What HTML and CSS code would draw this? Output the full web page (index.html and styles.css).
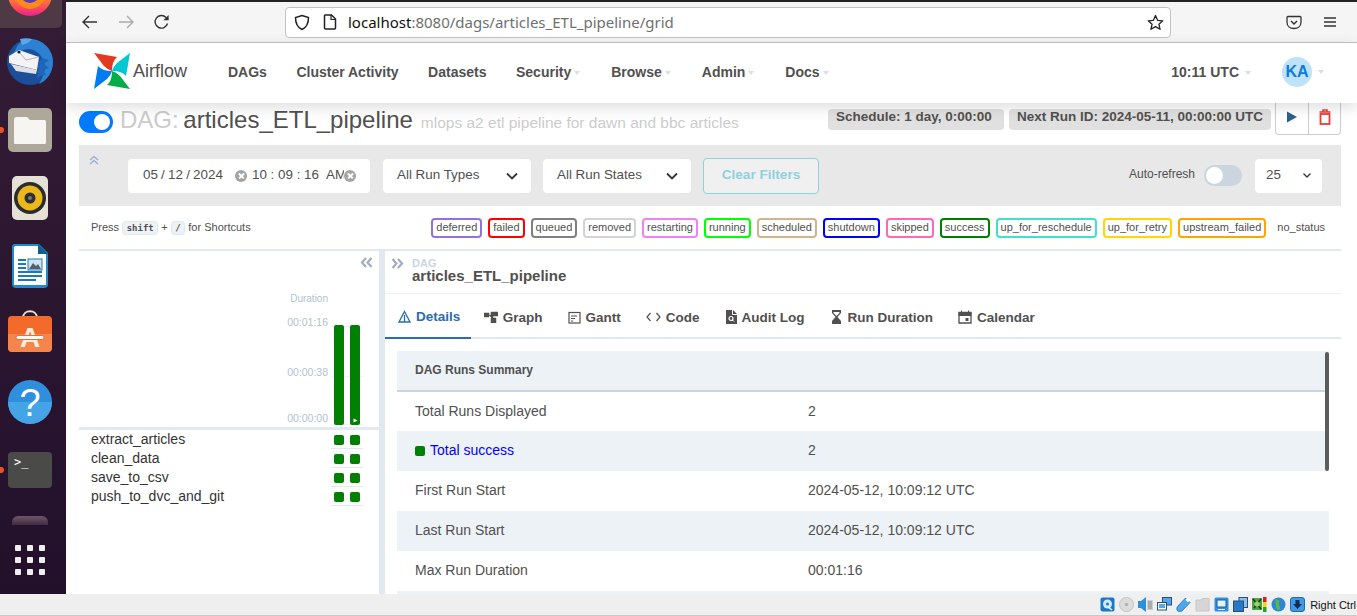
FILE: index.html
```html
<!DOCTYPE html>
<html lang="en">
	<head>
		<title>articles_ETL_pipeline - Grid - Airflow</title>
		<meta name="viewport" content="width=device-width, initial-scale=1" />
		<link rel="stylesheet" href="styles.css">
	</head>
	<body>
		<div class="desktop">
			<nav class="dock">
				<div class="dock-item dock-active">
					<svg width="44" height="44" viewBox="0 0 44 44"><defs><linearGradient id="fx" x1="0" y1="0" x2="0" y2="1"><stop offset="0.5" stop-color="#ff9a1f"/><stop offset="0.85" stop-color="#ff3f5f"/><stop offset="1" stop-color="#e5219a"/></linearGradient></defs><circle cx="22" cy="22" r="22" fill="url(#fx)"/><circle cx="22" cy="22" r="15" fill="#ff8b1f"/><circle cx="22" cy="21" r="10" fill="#5b3bb0"/></svg>
				</div>
				<div class="dock-item">
					<svg width="48" height="48" viewBox="0 0 48 48"><circle cx="24" cy="24" r="23" fill="#1c4f9a"/><path d="M8 16C10 6 17 1 24 1C36 1 47 11 47 24C47 34 41 43 33 46C38 38 40 30 38 24C35 15 28 11 22 11C17 11 14 14 13 17Z" fill="#2d80d2"/><path d="M14 1C18 0 22 0 26 1C24 4 20 6 16 7Z" fill="#5aa9e8"/><path d="M36 20L43 22L38 26L43 30L37 32L40 37L34 38L31 42L33 24Z" fill="#1f66ba"/><path d="M3 18L13 12L33 19L31 32L3 25Z" fill="#f4f2f4"/><path d="M5 26L31 32L30 36L10 33Z" fill="#e2dfe4"/><path d="M13 14L20 22L33 19" fill="none" stroke="#b9b4bc" stroke-width="1"/><circle cx="13" cy="14" r="1.600" fill="#16233f"/></svg>
				</div>
				<div class="dock-item dock-running">
					<svg width="44" height="44" viewBox="0 0 44 44"><rect width="44" height="44" rx="5" fill="#ada89a"/><path d="M6 12C6 10 7 9 9 9H19L22 12H36C38 12 38 13 38 15V34C38 36 37 36 36 36H8C6 36 6 36 6 34Z" fill="#f6f5f2"/></svg>
				</div>
				<div class="dock-item">
					<svg width="36" height="44" viewBox="0 0 36 44"><rect width="36" height="44" rx="5" fill="#e5e1d6"/><circle cx="18" cy="22" r="16" fill="#2b2b2b"/><circle cx="18" cy="22" r="12.500" fill="#eab71c"/><circle cx="18" cy="22" r="5.500" fill="#2e2e2e"/><circle cx="18" cy="22" r="2" fill="#777"/></svg>
				</div>
				<div class="dock-item">
					<svg width="36" height="44" viewBox="0 0 36 44"><path d="M3 0H27L36 9V40C36 43 34 44 32 44H4C2 44 0 43 0 40V3C0 1 1 0 3 0Z" fill="#1e8bcd"/><path d="M3 2H26V10H34V41H2V3Z" fill="#fff"/><path d="M26 0L36 10H26Z" fill="#0f5f8c"/><path d="M6 16H14M6 20H14M6 24H14M6 28H30M6 32H30M6 36H24" stroke="#1e78b8" stroke-width="2"/><rect x="16" y="15" width="14" height="11" fill="#cfe4f2" stroke="#1e78b8"/><path d="M17 25L21 19L24 22L26 20L29 25Z" fill="#56606b"/></svg>
				</div>
				<div class="dock-item">
					<svg class="store" width="44" height="44" viewBox="0 0 44 44"><path d="M15 6C15 -3 29 -3 29 6" fill="none" stroke="#f1dfc9" stroke-width="2"/><rect y="4" width="44" height="36" rx="4" fill="#f36b2b"/><path d="M0 22H44V36C44 38 42 40 40 40H4C2 40 0 38 0 36Z" fill="#f5854a"/><text x="22" y="35" class="dock-glyph store-glyph">A</text><rect x="8" y="23.500" width="28" height="4" rx="2" fill="#fff" stroke="#f36b2b"/></svg>
				</div>
				<div class="dock-item">
					<svg width="44" height="44" viewBox="0 0 44 44"><circle cx="22" cy="22" r="22" fill="#2f8fdd"/><path d="M0 22H44A22 22 0 0 1 0 22Z" fill="#45a4e6"/><text x="22" y="36" class="dock-glyph help-glyph">?</text></svg>
				</div>
				<div class="dock-item dock-running">
					<div class="term">&gt;_</div>
				</div>
				<div class="dock-peek"></div>
				<div class="dock-apps">
					<span></span><span></span><span></span>
					<span></span><span></span><span></span>
					<span></span><span></span><span></span>
				</div>
			</nav>

			<div class="browser">
				<div class="toolbar">
					<svg class="tool-icon" width="18" height="16" viewBox="0 0 18 16"><path d="M16 8H2M8 2L2 8L8 14" fill="none" stroke="#333" stroke-width="1.400"/></svg>
					<svg class="tool-icon" width="18" height="16" viewBox="0 0 18 16"><path d="M2 8H16M10 2L16 8L10 14" fill="none" stroke="#aaa" stroke-width="1.400"/></svg>
					<svg class="tool-icon" width="18" height="16" viewBox="0 0 18 16"><path d="M14.500 9.500A6.300 6.300 0 1 1 13 3.500L15 5.500" fill="none" stroke="#333" stroke-width="1.400"/><path d="M15.600 1V6.200H10.400Z" fill="#333"/></svg>
					<div class="urlbar">
						<svg width="16" height="17" viewBox="0 0 16 17"><path d="M8 1.500L14.500 3.500C14.500 10 12.500 13.500 8 15.500C3.500 13.500 1.500 10 1.500 3.500Z" fill="none" stroke="#222" stroke-width="1.500"/></svg>
						<svg width="14" height="16" viewBox="0 0 14 16"><path d="M2 1H8.500L12.500 5V14C12.500 14.600 12 15 11.500 15H2.500C2 15 1.500 14.600 1.500 14V1.500Z" fill="none" stroke="#222" stroke-width="1.500"/><path d="M8 1V5.500H12.500" fill="none" stroke="#222" stroke-width="1.200"/></svg>
						<span class="url"><b>localhost</b>:8080/dags/articles_ETL_pipeline/grid</span>
						<svg width="17" height="17" viewBox="0 0 17 17"><path d="M8.500 1.500L10.600 6.300L15.800 6.800L11.900 10.200L13.100 15.300L8.500 12.600L3.900 15.300L5.100 10.200L1.200 6.800L6.400 6.300Z" fill="none" stroke="#222" stroke-width="1.300" stroke-linejoin="round"/></svg>
					</div>
					<svg class="pocket" width="16" height="15" viewBox="0 0 16 15"><path d="M2 1.500H14C14.600 1.500 15 1.900 15 2.500V7C15 11 12 13.500 8 13.500C4 13.500 1 11 1 7V2.500C1 1.900 1.400 1.500 2 1.500Z" fill="none" stroke="#333" stroke-width="1.300"/><path d="M5 6L8 9L11 6" fill="none" stroke="#333" stroke-width="1.500"/></svg>
					<svg class="menu" width="14" height="12" viewBox="0 0 14 12"><path d="M1 2H13M1 6H13M1 10H13" stroke="#333" stroke-width="1.300"/></svg>
				</div>

				<header class="navbar">
					<div class="brand">
						<svg width="36" height="36" viewBox="0 0 36 36">
							<path d="M0 0L10 13Q14 17 18 18Q18 8 23 4Z" fill="#e43921"/>
							<path d="M36 0L23 10Q19 14 18 18Q28 18 32 23Z" fill="#00c7d4"/>
							<path d="M36 36L26 23Q22 19 18 18Q18 28 13 32Z" fill="#00ad46"/>
							<path d="M0 36L13 26Q17 22 18 18Q8 18 4 13Z" fill="#017cee"/>
						</svg>
						<span>Airflow</span>
					</div>
					<div class="nav-links">
						<a>DAGs</a>
						<a>Cluster Activity</a>
						<a>Datasets</a>
						<a class="caret">Security</a>
						<a class="caret">Browse</a>
						<a class="caret">Admin</a>
						<a class="caret">Docs</a>
					</div>
					<a class="caret clock">10:11 UTC</a>
					<div class="caret user"><span class="avatar">KA</span></div>
				</header>

				<main class="content">
					<div class="title-row">
						<span class="switch switch-on"></span>
						<h1><span class="title-prefix">DAG:</span> articles_ETL_pipeline</h1>
						<span class="dag-desc">mlops a2 etl pipeline for dawn and bbc articles</span>
						<span class="pill pill-first">Schedule: 1 day, 0:00:00</span>
						<span class="pill">Next Run ID: 2024-05-11, 00:00:00 UTC</span>
						<div class="actions">
							<button class="action"><svg width="12" height="12" viewBox="0 0 12 12"><path d="M1 0.500V11.500L11 6Z" fill="#2b6190"/></svg></button>
							<button class="action"><svg width="12" height="16" viewBox="0 0 12 16"><path d="M0.500 3H11.500M4 3V1H8V3" fill="none" stroke="#e53e3e" stroke-width="1.500"/><rect x="1.500" y="5" width="9" height="10" fill="none" stroke="#e53e3e" stroke-width="1.800"/></svg></button>
						</div>
					</div>

					<div class="filters">
						<svg class="collapse" width="10" height="10" viewBox="0 0 10 10"><path d="M1 5L5 1.500L9 5M1 9L5 5.500L9 9" fill="none" stroke="#9fb3d1" stroke-width="1.600"/></svg>
						<div class="field date-field">
							<span class="date">05 / 12 / 2024</span>
							<i class="clear-x"></i>
							<span class="time">10 : 09 : 16</span>
							<span class="ampm">AM</span>
							<i class="clear-x"></i>
						</div>
						<div class="field select-field">All Run Types<svg width="12" height="8" viewBox="0 0 12 8"><path d="M1 1.500L6 6.500L11 1.500" fill="none" stroke="#333" stroke-width="1.800"/></svg></div>
						<div class="field select-field">All Run States<svg width="12" height="8" viewBox="0 0 12 8"><path d="M1 1.500L6 6.500L11 1.500" fill="none" stroke="#333" stroke-width="1.800"/></svg></div>
						<button class="clear-filters">Clear Filters</button>
						<span class="refresh-label">Auto-refresh</span>
						<span class="switch switch-off"></span>
						<div class="field page-size">25<svg width="8" height="5" viewBox="0 0 8 5"><path d="M0.500 0.500L4 4L7.500 0.500" fill="none" stroke="#333" stroke-width="1.300"/></svg></div>
					</div>

					<div class="legend-row">
						<div class="shortcuts">Press <kbd>shift</kbd> + <kbd>/</kbd> for Shortcuts</div>
						<div class="legend">
							<span class="state s-deferred">deferred</span>
							<span class="state s-failed">failed</span>
							<span class="state s-queued">queued</span>
							<span class="state s-removed">removed</span>
							<span class="state s-restarting">restarting</span>
							<span class="state s-running">running</span>
							<span class="state s-scheduled">scheduled</span>
							<span class="state s-shutdown">shutdown</span>
							<span class="state s-skipped">skipped</span>
							<span class="state s-success">success</span>
							<span class="state s-reschedule">up_for_reschedule</span>
							<span class="state s-retry">up_for_retry</span>
							<span class="state s-upstream">upstream_failed</span>
							<span class="state s-none">no_status</span>
						</div>
					</div>

					<div class="panels">
						<section class="grid-panel">
							<svg class="panel-toggle" width="13" height="11" viewBox="0 0 13 11"><path d="M6 1L2 5.500L6 10M11.500 1L7.500 5.500L11.500 10" fill="none" stroke="#a0aec0" stroke-width="2.200"/></svg>
							<div class="chart">
								<div class="axis">
									<span class="axis-title">Duration</span>
									<span class="tick tick-top">00:01:16</span>
									<span class="tick tick-mid">00:00:38</span>
									<span class="tick">00:00:00</span>
								</div>
								<div class="bars">
									<span class="bar"></span>
									<span class="bar"><svg width="5" height="5" viewBox="0 0 5 5"><path d="M0.500 0.500V4.500L4.500 2.500Z" fill="#fff"/></svg></span>
								</div>
							</div>
							<div class="chart-rule"></div>
							<div class="task"><span>extract_articles</span><div class="cells"><i></i><i></i></div></div>
							<div class="task"><span>clean_data</span><div class="cells"><i></i><i></i></div></div>
							<div class="task"><span>save_to_csv</span><div class="cells"><i></i><i></i></div></div>
							<div class="task"><span>push_to_dvc_and_git</span><div class="cells"><i></i><i></i></div></div>
						</section>

						<section class="details-panel">
							<div class="crumbs">
								<svg width="13" height="11" viewBox="0 0 13 11"><path d="M1.500 1L5.500 5.500L1.500 10M7 1L11 5.500L7 10" fill="none" stroke="#a0aec0" stroke-width="2.200"/></svg>
								<div>
									<div class="crumb-label">DAG</div>
									<div class="crumb-name">articles_ETL_pipeline</div>
								</div>
							</div>
							<div class="tabs">
								<a class="tab tab-active"><svg width="13" height="13" viewBox="0 0 13 13"><path d="M6.500 1.500L12 12H1Z M6.500 5V12" fill="none" stroke="#2b6cb0" stroke-width="1.300"/></svg>Details</a>
								<a class="tab"><svg width="14" height="12" viewBox="0 0 14 12"><path d="M0 2H5V6H0ZM7 1H14V5H7ZM7 7H12V12H7Z M5 4H9V9" fill="#51504f" stroke="#51504f" stroke-width="0.500"/></svg>Graph</a>
								<a class="tab"><svg width="13" height="13" viewBox="0 0 13 13"><rect x="1" y="1.500" width="11" height="10.500" fill="none" stroke="#51504f" stroke-width="1.200"/><path d="M3 5H9M3 7.500H7M3 10H5" stroke="#51504f"/></svg>Gantt</a>
								<a class="tab"><svg width="15" height="10" viewBox="0 0 15 10"><path d="M4.500 1L1 5L4.500 9M10.500 1L14 5L10.500 9" fill="none" stroke="#51504f" stroke-width="1.200"/></svg>Code</a>
								<a class="tab"><svg width="12" height="14" viewBox="0 0 12 14"><path d="M1 0H8L12 4V14H1Z" fill="#51504f"/><path d="M7.500 0V4.500H12" fill="none" stroke="#fff"/><circle cx="6" cy="8.500" r="2" fill="none" stroke="#fff" stroke-width="1.200"/><path d="M7.500 10L9 11.500" stroke="#fff"/></svg>Audit Log</a>
								<a class="tab"><svg width="13" height="14" viewBox="0 0 13 14"><path d="M2 0H11V3L7.500 7L11 11V14H2V11L5.500 7L2 3Z" fill="#51504f"/><path d="M3.500 2H9.500V3L6.500 6L3.500 3Z" fill="#fff"/></svg>Run Duration</a>
								<a class="tab"><svg width="14" height="14" viewBox="0 0 14 14"><path d="M1 2.500H13V13H1Z" fill="none" stroke="#51504f" stroke-width="1.300"/><path d="M1 2.500H13V5.500H1ZM3.500 0.500V2.500M10.500 0.500V2.500" fill="#51504f" stroke="#51504f"/><rect x="7.500" y="8" width="3" height="3" fill="#51504f"/></svg>Calendar</a>
							</div>
							<div class="summary">
								<table>
									<colgroup>
										<col class="col-label">
										<col>
									</colgroup>
									<thead>
										<tr><th colspan="2">DAG Runs Summary</th></tr>
									</thead>
									<tbody>
										<tr><td>Total Runs Displayed</td><td>2</td></tr>
										<tr><td><i class="dot"></i><a class="success-link">Total success</a></td><td>2</td></tr>
										<tr><td>First Run Start</td><td>2024-05-12, 10:09:12 UTC</td></tr>
										<tr><td>Last Run Start</td><td>2024-05-12, 10:09:12 UTC</td></tr>
										<tr><td>Max Run Duration</td><td>00:01:16</td></tr>
										<tr><td></td><td></td></tr>
									</tbody>
								</table>
								<div class="scrollbar"></div>
							</div>
						</section>
					</div>
				</main>
			</div>
		</div>

		<footer class="vbox-bar">
			<svg width="15" height="15" viewBox="0 0 15 15"><rect x="0.500" y="0.500" width="14" height="14" rx="2" fill="#1b78c8"/><circle cx="7.500" cy="7" r="4.500" fill="#cfe8fa"/><circle cx="7.500" cy="7" r="1.500" fill="#1b78c8"/><path d="M8 10L12 13" stroke="#fff" stroke-width="1.500"/></svg>
			<svg width="15" height="15" viewBox="0 0 15 15"><circle cx="7.500" cy="7.500" r="7" fill="#dcdcdc" stroke="#c4c4c4"/><circle cx="7.500" cy="7.500" r="1.800" fill="#b4b4b4"/></svg>
			<svg width="15" height="15" viewBox="0 0 15 15"><path d="M0 4H3L8 0V15L3 11H0Z" fill="#2f8fdb"/><path d="M9 3H15V13H9Z" fill="#cfcfcf"/><path d="M10 5H14M10 7H14M10 9H14M10 11H14" stroke="#888"/></svg>
			<svg width="15" height="15" viewBox="0 0 15 15"><rect x="5.500" y="0.500" width="9" height="7.500" fill="#58a6e6" stroke="#24507d"/><rect x="0.500" y="5.500" width="9" height="7.500" fill="#fff" stroke="#24507d"/><rect x="2" y="7" width="6" height="4" fill="#58a6e6"/></svg>
			<svg width="15" height="15" viewBox="0 0 15 15"><path d="M9.500 1L14 5.500L6 14C4 15 1.500 14.500 1 13C0.500 11.500 1 10 2 9Z" fill="#4ca8ea" stroke="#1f6fb5" stroke-width="0.800"/><rect x="10" y="1.500" width="3.500" height="3" transform="rotate(45 11.700 3)" fill="#fff"/></svg>
			<svg width="15" height="15" viewBox="0 0 15 15"><path d="M1 3H6L7.500 1.500H14V14H1Z" fill="#d6d6d6" stroke="#c6c6c6"/></svg>
			<svg width="15" height="15" viewBox="0 0 15 15"><rect x="0.500" y="0.500" width="14" height="14" rx="1.500" fill="#2f93e0"/><rect x="3" y="3" width="9" height="7" fill="#e5f3fd" stroke="#15609e"/><path d="M4 12.500H11" stroke="#fff"/></svg>
			<svg width="15" height="15" viewBox="0 0 15 15"><rect x="6" y="0.500" width="8.500" height="10" fill="#8fbde8" stroke="#24507d"/><rect x="0.500" y="4" width="10" height="10.500" fill="#2a77c6" stroke="#24507d"/></svg>
			<svg width="15" height="15" viewBox="0 0 15 15"><rect x="0" y="1" width="10" height="12" fill="#4fa34a"/><path d="M1 2L9 12M9 2L2 11" stroke="#12380f" stroke-width="1.500"/><circle cx="5" cy="7" r="2.500" fill="#9ed36a"/><rect x="11" y="0" width="3.500" height="5" fill="#d42020"/><rect x="11" y="5" width="3.500" height="5" fill="#f2d21a"/><rect x="11" y="10" width="3.500" height="5" fill="#24a324"/></svg>
			<svg width="15" height="15" viewBox="0 0 15 15"><circle cx="7.500" cy="7.500" r="7" fill="#2f86d6"/><path d="M5 2C8 3 9 4 8 6C7 8 10 9 9 12C8 14 6 13 5 11C4 9 6 8 4 6Z" fill="#56b84a"/></svg>
			<svg width="15" height="15" viewBox="0 0 15 15"><rect x="0.500" y="0.500" width="14" height="14" rx="2.500" fill="#3d9be8" stroke="#1c6bb3"/><path d="M5.500 3H9.500V7H12L7.500 12L3 7H5.500Z" fill="#0e2f57"/></svg>
			<span class="host-key">Right Ctrl</span>
		</footer>
	</body>
</html>
```

FILE: styles.css
```css
* {
	box-sizing: border-box;
}

html,
body {
	height: 616px;
	margin: 0;
	overflow: hidden;
}

body {
	background: #efefef;
	color: #51504f;
	font-family: "Liberation Sans", Arial, sans-serif;
	font-size: 14px;
}

.desktop {
	display: flex;
	height: 594px;
}

/* ubuntu dock */

.dock {
	background: linear-gradient(#341c36, #22102a);
	display: flex;
	flex: 0 0 66px;
	flex-direction: column;
	overflow: hidden;
	position: relative;
}

.dock-item {
	align-items: center;
	display: flex;
	flex: 0 0 68px;
	justify-content: center;
	padding-right: 6px;
	position: relative;
}

.dock-item:first-child {
	margin-top: -40px;
}

.dock-active {
	background: #4d3a45;
	border-radius: 0 0 5px 0;
	margin-right: 4px;
	padding-right: 2px;
}

.dock-running:before {
	background: #e95420;
	border-radius: 50%;
	content: "";
	height: 6px;
	left: -2px;
	position: absolute;
	top: 31px;
	width: 6px;
}

.dock-glyph {
	fill: #fff;
	font-family: "Liberation Sans", sans-serif;
	text-anchor: middle;
}

.store {
	overflow: visible;
}

.store-glyph {
	fill: #fdeee4;
	font-size: 28px;
	font-weight: 700;
}

.help-glyph {
	font-size: 38px;
}

.term {
	background: #4a4a48;
	border-radius: 4px;
	color: #fff;
	font-family: "DejaVu Sans Mono", monospace;
	font-size: 12px;
	height: 36px;
	line-height: 14px;
	padding: 3px 6px;
	width: 44px;
}

.dock-peek {
	background: linear-gradient(#6e5766, #402c42);
	border-radius: 6px 6px 0 0;
	flex: 0 0 9px;
	margin: 12px 0 0 12px;
	width: 36px;
}

.dock-apps {
	display: grid;
	gap: 6px;
	grid-template-columns: repeat(3, 6px);
	margin: 20px 0 0 15px;
}

.dock-apps span {
	background: #eeeeee;
	border-radius: 1px;
	height: 6px;
}

/* firefox chrome */

.browser {
	background: #ffffff;
	display: flex;
	flex: 1;
	flex-direction: column;
	min-width: 0;
}

.toolbar {
	align-items: center;
	background: #f5f5f5;
	border-bottom: 1px solid #c4c4c4;
	border-top: 2px solid #222222;
	display: flex;
	flex: 0 0 43px;
	padding-left: 15px;
}

.tool-icon {
	margin-right: 18px;
}

.tool-icon:nth-child(3) {
	margin-right: 0;
}

.urlbar {
	align-items: center;
	background: #ffffff;
	border: 1px solid #c2c2c2;
	border-radius: 4px;
	display: flex;
	height: 31px;
	margin-left: 114px;
	padding: 0 6px 0 8px;
	width: 886px;
}

.urlbar svg:nth-child(2) {
	margin-left: 13px;
}

.url {
	color: #6f6f6f;
	flex: 1;
	font-family: "Noto Sans", sans-serif;
	font-size: 15px;
	margin-left: 11px;
}

.url b {
	color: #111111;
	font-weight: 400;
}

.pocket {
	margin-left: 115px;
}

.menu {
	margin-left: 21px;
}

/* airflow navbar */

.navbar {
	align-items: center;
	background: #ffffff;
	box-shadow: 0 4px 14px rgba(0, 0, 0, 0.14);
	display: flex;
	flex: 0 0 60px;
	padding: 0 33px 2px 28px;
	position: relative;
	z-index: 2;
}

.brand {
	align-items: center;
	display: flex;
	font-size: 18px;
	gap: 3px;
	margin-bottom: 2px;
	width: 134px;
}

.nav-links {
	display: flex;
	flex: 1;
	gap: 29.5px;
}

.nav-links .caret {
	margin-right: 1.5px;
}

.navbar a {
	font-weight: 700;
}

.caret:after {
	border-left: 3.5px solid transparent;
	border-right: 3.5px solid transparent;
	border-top: 4px solid #e4d9e6;
	content: "";
	display: inline-block;
	margin-left: 3px;
	vertical-align: 2px;
}

.clock {
	margin-right: 31px;
}

.clock:after {
	margin-left: 6px;
}

.user {
	align-items: center;
	display: flex;
}

.user:after {
	margin-left: 6px;
}

.avatar {
	align-items: center;
	background: #bee3f8;
	border-radius: 50%;
	color: #0b7ae0;
	display: flex;
	font-size: 16px;
	font-weight: 700;
	height: 30px;
	justify-content: center;
	width: 30px;
}

/* dag page */

.content {
	display: flex;
	flex: 1;
	flex-direction: column;
	min-height: 0;
	padding: 0 16px 0 13px;
}

.title-row {
	align-items: flex-start;
	display: flex;
	flex: 0 0 42px;
}

.switch {
	border-radius: 11px;
	display: block;
	position: relative;
}

.switch:after {
	background: #ffffff;
	border-radius: 50%;
	content: "";
	position: absolute;
}

.switch-on {
	background: #007bff;
	flex: 0 0 34px;
	height: 22px;
	margin-top: 8px;
}

.switch-on:after {
	height: 16px;
	right: 3px;
	top: 3px;
	width: 16px;
}

.switch-off {
	background: #cbd5e0;
	flex: 0 0 38px;
	height: 21px;
	margin: 0 13px 0 9px;
}

.switch-off:after {
	height: 17px;
	left: 2px;
	top: 2px;
	width: 17px;
}

h1 {
	color: #51504f;
	font-size: 24px;
	font-weight: 400;
	line-height: 28px;
	margin: 3px 0 0 7px;
	word-spacing: -2px;
}

.title-prefix {
	color: #cccccc;
}

.dag-desc {
	color: #cccccc;
	flex: 1;
	font-size: 15.5px;
	margin: 11px 0 0 8px;
}

.pill {
	background: #e0e0e0;
	border-radius: 4px;
	font-size: 13.5px;
	font-weight: 700;
	height: 21px;
	line-height: 16px;
	margin: 6px 0 0 5px;
	padding: 0 8px;
	white-space: nowrap;
}

.pill-first {
	margin-left: 0;
	padding-right: 12px;
}

.actions {
	border: 1px solid #cccccc;
	border-radius: 0 0 4px 4px;
	border-top: 0;
	display: flex;
	height: 32px;
	margin-left: 4px;
}

.action {
	align-items: center;
	background: none;
	border: 0;
	display: flex;
	height: 100%;
	justify-content: center;
	padding: 0 0 4px;
	width: 32px;
}

.action + .action {
	border-left: 1px solid #cccccc;
}

/* filters */

.filters {
	align-items: center;
	background: #e8e8e8;
	display: flex;
	flex: 0 0 61px;
	padding: 0 19px 0 10px;
	position: relative;
}

.collapse {
	align-self: flex-start;
	margin: 10px 29px 0 0;
}

.field {
	align-items: center;
	background: #ffffff;
	border-radius: 4px;
	display: flex;
	font-size: 13.4px;
	height: 34px;
	padding-bottom: 3px;
}

.field svg {
	margin-top: 3px;
}

.date-field {
	color: #51504f;
	padding-left: 15px;
	width: 242px;
}

.date {
	word-spacing: -0.5px;
	width: 92px;
}

.time {
	margin-left: 5px;
	width: 74px;
}

.ampm {
	overflow: hidden;
	width: 18px;
}

.clear-x {
	background: #a4a4a4;
	border-radius: 50%;
	display: block;
	height: 12px;
	margin-top: 3px;
	position: relative;
	width: 12px;
}

.clear-x:before,
.clear-x:after {
	background: #ffffff;
	content: "";
	height: 1.5px;
	left: 2.5px;
	position: absolute;
	top: 5.25px;
	transform: rotate(45deg);
	width: 7px;
}

.clear-x:after {
	transform: rotate(-45deg);
}

.select-field {
	justify-content: space-between;
	margin-left: 13px;
	padding-left: 14px;
	padding-right: 13px;
	width: 148px;
}

.select-field + .select-field {
	margin-left: 12px;
}

.clear-filters {
	background: #f0f0f0;
	border: 1px solid #8fd0de;
	border-radius: 4px;
	color: #8fd0de;
	font-family: inherit;
	font-size: 13.6px;
	font-weight: 700;
	height: 36px;
	margin: 0 auto 0 12px;
	padding: 0 0 3px;
	width: 116px;
}

.refresh-label {
	font-size: 12px;
	margin-bottom: 3px;
}

.page-size {
	justify-content: space-between;
	padding-left: 11px;
	padding-right: 11px;
	width: 67px;
}

/* legend */

.legend-row {
	align-items: center;
	border-bottom: 2px solid #e2e8f0;
	display: flex;
	flex: 0 0 45px;
	font-size: 11px;
	justify-content: space-between;
	padding: 0 11px 0 12px;
}

.shortcuts {
	margin-bottom: 2px;
	white-space: nowrap;
}

kbd {
	background: #edf2f7;
	border: 1px solid #e2e8f0;
	border-radius: 4px;
	font-family: "DejaVu Sans Mono", monospace;
	font-size: 9px;
	font-weight: 700;
	padding: 1px 3.5px;
}

.legend {
	display: flex;
	gap: 6px;
}

.state {
	border: 2px solid;
	border-radius: 4px;
	color: #51504f;
	height: 20px;
	line-height: 15px;
	padding: 0 3px;
	white-space: nowrap;
}

.s-deferred { border-color: #9370db; }
.s-failed { border-color: #ff0000; }
.s-queued { border-color: #808080; }
.s-removed { border-color: #d3d3d3; }
.s-restarting { border-color: #ee82ee; }
.s-running { border-color: #00ff00; }
.s-scheduled { border-color: #d2b48c; }
.s-shutdown { border-color: #0000ff; }
.s-skipped { border-color: #ff69b4; }
.s-success { border-color: #008000; }
.s-reschedule { border-color: #40e0d0; }
.s-retry { border-color: #ffd700; }
.s-upstream { border-color: #ffa500; }
.s-none { border-color: transparent; }

/* grid + details */

.panels {
	display: flex;
	flex: 1;
	min-height: 0;
}

.grid-panel {
	border-right: 6px solid #e2e8f0;
	flex: 0 0 306px;
}

.panel-toggle {
	display: block;
	margin: 6px 6px 0 auto;
}

.chart {
	display: flex;
	height: 157px;
	justify-content: flex-end;
	margin-top: 2px;
	padding-right: 16px;
}

.axis {
	color: #b3bfd2;
	display: flex;
	flex-direction: column;
	font-size: 10.5px;
	line-height: 12px;
	padding-top: 23px;
	text-align: right;
	width: 60px;
}

.axis-title {
	font-size: 10px;
	height: 23px;
}

.tick {
	height: 12px;
}

.tick-top {
	margin-bottom: 38px;
}

.tick-mid {
	margin-bottom: 34px;
}

.bars {
	background:
		linear-gradient(#edf2f7, #edf2f7) 0 56px / 100% 1px no-repeat,
		linear-gradient(#edf2f7, #edf2f7) 0 106px / 100% 1px no-repeat,
		linear-gradient(#edf2f7, #edf2f7) 0 154px / 100% 1px no-repeat;
	display: flex;
	gap: 6px;
	height: 157px;
	margin-left: 3px;
	padding: 55px 3px 0;
	width: 32px;
}

.bar {
	align-items: flex-end;
	background: #008000;
	border-radius: 2px;
	display: flex;
	height: 100px;
	justify-content: center;
	padding-bottom: 2px;
	width: 10px;
}

.chart-rule {
	background: #e2e8f0;
	height: 3px;
}

.task {
	align-items: center;
	color: #333333;
	display: flex;
	height: 19px;
	justify-content: space-between;
	padding: 0 16px 0 12px;
}

.task span {
	margin-bottom: 2px;
}

.cells {
	border-bottom: 1px solid #e2e8f0;
	display: flex;
	gap: 6px;
	height: 19px;
	padding: 5px 3px 0;
	width: 32px;
}

.cells i {
	background: #008000;
	border-radius: 2px;
	display: block;
	height: 10px;
	width: 10px;
}

.details-panel {
	display: flex;
	flex: 1;
	flex-direction: column;
	min-width: 0;
}

.crumbs {
	align-items: flex-start;
	border-bottom: 1px solid #edf2f7;
	display: flex;
	flex: 0 0 43px;
	gap: 8px;
	padding: 6px 0 0 6px;
}

.crumbs svg {
	margin-top: 1px;
}

.crumb-label {
	color: #cbd5e0;
	font-size: 11px;
	font-weight: 700;
	line-height: 12px;
}

.crumb-name {
	font-size: 15px;
	font-weight: 700;
	line-height: 13px;
}

.tabs {
	border-bottom: 2px solid #e2e8f0;
	display: flex;
	flex: 0 0 45px;
	margin-bottom: 12px;
	min-height: 0;
}

.tab {
	align-items: center;
	display: flex;
	font-size: 13.5px;
	font-weight: 700;
	gap: 5px;
	height: 45px;
	padding: 1px 12.5px 0;
}

.tab-active {
	border-bottom: 2px solid #2b6cb0;
	color: #2b6cb0;
	padding-left: 13px;
	padding-right: 11px;
}

.summary {
	flex: 1;
	min-height: 0;
	overflow: hidden;
	padding-left: 12px;
	position: relative;
	width: 944px;
}

table {
	border-collapse: collapse;
	table-layout: fixed;
	width: 932px;
}

.col-label {
	width: 393px;
}

th {
	background: #edf2f7;
	border-bottom: 2px solid #cbd5e0;
	font-size: 12px;
	height: 40px;
	padding: 0 18px 2px;
	text-align: left;
}

td {
	height: 40px;
	padding: 0 18px 2px;
}

tbody tr:nth-child(even) {
	background: #edf2f7;
}

.dot {
	background: #008000;
	border-radius: 2px;
	display: inline-block;
	height: 10px;
	margin-right: 5px;
	vertical-align: -1px;
	width: 10px;
}

.success-link {
	color: #0000ff;
}

.scrollbar {
	background: #5c5c5c;
	border-radius: 2px;
	height: 119px;
	position: absolute;
	right: 0;
	top: 1px;
	width: 4px;
}

/* virtualbox status bar */

.vbox-bar {
	align-items: center;
	border-bottom: 1px solid #c9c9c9;
	display: flex;
	gap: 4px;
	height: 22px;
	justify-content: flex-end;
	padding-right: 1px;
}

.host-key {
	color: #111111;
	font-size: 11px;
	margin-left: 1px;
}
```
